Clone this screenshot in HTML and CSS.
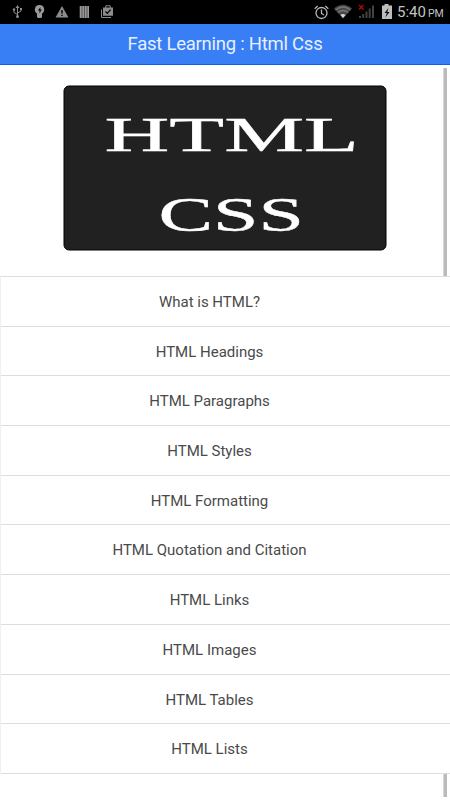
FILE: index.html
```html
<!DOCTYPE html>
<html lang="en">
<head>
    <meta charset="UTF-8">
    <meta name="viewport" content="width=device-width, initial-scale=1.0">
    <title>Fast Learning : Html Css</title>
    <link rel="stylesheet" href="styles.css">
</head>
<body>
    <!-- Status bar -->
    <div class="status-bar">
        <svg class="status-icons" width="120" height="24" viewBox="0 0 120 24">
            <!-- usb -->
            <g fill="none" stroke="#8c8c8c" stroke-width="1">
                <path d="M17.5 7v10M17.5 14.5l-3.5-2V9.500M17.5 13l3.500-2V9"/>
            </g>
            <path d="M17.500 5l2 3h-4z" fill="#8c8c8c"/>
            <circle cx="17.500" cy="16.500" r="1.500" fill="#8c8c8c"/>
            <circle cx="14" cy="9.500" r="1.200" fill="#8c8c8c"/>
            <path d="M20 8h2v2h-2z" fill="#8c8c8c"/>
            <!-- bulb -->
            <path d="M39.500 5a4.600 4.600 0 0 0-2.500 8.500V17l1 1h3l1-1v-3.500A4.600 4.600 0 0 0 39.500 5z" fill="#9a9a9a"/>
            <path d="M40.500 7l-2.500 3.500h1.500v3l2.200-4h-1.500z" fill="#000"/>
            <!-- warning -->
            <path d="M62 6l6.500 11.500h-13z" fill="#8c8c8c"/>
            <path d="M61.300 10h1.400v3.500h-1.400zM61.300 14.700h1.400V16h-1.400z" fill="#000"/>
            <!-- bars -->
            <path d="M79.500 6h9.500v12h-9.500z" fill="#555"/>
            <path d="M80 6h1.500v12H80zM82.500 6H84v12h-1.500zM85 6h1.500v12H85zM87.500 6h1.500v12h-1.500z" fill="#999"/>
            <!-- store bag -->
            <path d="M103 7.500h2.200V6l.8-.8h4l.8.8v1.500h2.200v8.300h-10zM106.200 6.200v1.300h3.600V6.200z" fill="#8c8c8c" fill-rule="evenodd"/>
            <path d="M101.500 9.500v8h9.500" fill="none" stroke="#8c8c8c" stroke-width="1"/>
            <path d="M105.500 11.500l1.800 1.800 3.300-3.600" fill="none" stroke="#000" stroke-width="1.200"/>
        </svg>
        <div class="status-right">
            <svg width="80" height="24" viewBox="0 0 80 24">
                <!-- alarm -->
                <g fill="none" stroke="#b8b8b8" stroke-width="1.300">
                    <circle cx="8.500" cy="13" r="5.500"/>
                    <path d="M8.500 9.500V13.500l2.500 1.500M1.700 8.700l3-2.700M15.300 8.700l-3-2.700"/>
                </g>
                <!-- wifi -->
                <path d="M21 8.500Q30 1 39 8.500L30 18.500z" fill="#484848"/>
                <path d="M22.500 10Q30 4 37.500 10M24.800 12.500Q30 8.500 35.200 12.500" fill="none" stroke="#777" stroke-width="1.300"/>
                <path d="M27.500 15Q30 13 32.500 15L30 18z" fill="#d5d5d5"/>
                <!-- signal -->
                <path d="M46 16h2v2h-2zM49.200 14h2v4h-2zM52.500 11.500h2v6.500h-2zM55.700 8.500h2V18h-2zM59 5.500h2V18h-2z" fill="#424242"/>
                <path d="M46 5l4.500 4.500M50.500 5l-4.500 4.500" stroke="#a30d0d" stroke-width="1.500"/>
                <!-- battery -->
                <path d="M69 5.500h2.500V4h4v1.500H79V19H69z" fill="#bdbdbd"/>
                <path d="M75.500 8l-4 5h2.300l-1.500 4.500 4.300-5.500h-2.300z" fill="#111"/>
            </svg>
            <span class="clock">5:40</span>
            <span class="clock-pm">PM</span>
        </div>
    </div>

    <!-- Title -->
    <header class="title-bar">
        <h1>Fast Learning : Html Css</h1>
    </header>

    <!-- Content -->
    <main class="content">
        <div class="scrollbar"></div>
        <svg class="banner" width="324" height="166" viewBox="0 0 324 166">
            <rect x="1" y="1" width="322" height="164" rx="5" fill="#212121" stroke="#000" stroke-width="1"/>
            <g class="banner-text">
                <text transform="translate(41.500 65.500) scale(1.870 1)" textLength="136" lengthAdjust="spacingAndGlyphs">HTML</text>
                <text transform="translate(95.500 146) scale(1.690 1)" textLength="86" lengthAdjust="spacingAndGlyphs">CSS</text>
            </g>
        </svg>

        <ul class="lessons">
            <li>What is HTML?</li>
            <li>HTML Headings</li>
            <li>HTML Paragraphs</li>
            <li>HTML Styles</li>
            <li>HTML Formatting</li>
            <li>HTML Quotation and Citation</li>
            <li>HTML Links</li>
            <li>HTML Images</li>
            <li>HTML Tables</li>
            <li>HTML Lists</li>
        </ul>
    </main>
</body>
</html>
```
FILE: styles.css
```css
* {
    box-sizing: border-box;
}

body {
    font-family: Roboto, "Liberation Sans", sans-serif;
    margin: 0;
    height: 800px;
    background: #fff;
    color: #4a4a4a;
    overflow: hidden;
}

/* Status bar */
.status-bar {
    display: flex;
    justify-content: space-between;
    height: 24px;
    background: #000;
    color: #c4c4c4;
}

.status-right {
    display: flex;
    width: 137px;
    line-height: 25px;
    white-space: nowrap;
}

.clock {
    margin-left: 4px;
    font-size: 15px;
}

.clock-pm {
    margin-left: 2px;
    font-size: 10.5px;
    line-height: 28px;
}

/* Title */
.title-bar {
    height: 41px;
    background: #387ef5;
    border-bottom: 1px solid #0c60ee;
    text-align: center;
}

.title-bar h1 {
    margin: 0;
    font-size: 18.5px;
    font-weight: 400;
    line-height: 41px;
    letter-spacing: -0.25px;
    color: #e9f0fe;
}

/* Content */
.content {
    position: relative;
    height: 735px;
    padding-top: 20px;
}

.banner {
    display: block;
    margin-left: 63px;
}

.banner-text {
    font-family: "Liberation Serif", serif;
    font-size: 48px;
    fill: #fff;
    stroke: #fff;
    stroke-width: 0.4px;
}

.scrollbar {
    position: absolute;
    top: 3px;
    right: 3px;
    width: 4px;
    height: 729px;
    background: #bbb;
    border-left: 1px solid #d8d8d8;
}

/* Lessons list */
.lessons {
    position: relative;
    list-style: none;
    margin: 25px 0 0;
    padding: 0;
    border-top: 1px solid #ddd;
    border-left: 1px solid #f0f0f0;
    background: #fff;
}

.lessons li {
    height: 49.7px;
    padding-right: 32px;
    border-bottom: 1px solid #ddd;
    font-size: 15px;
    line-height: 50px;
    text-align: center;
}
```
